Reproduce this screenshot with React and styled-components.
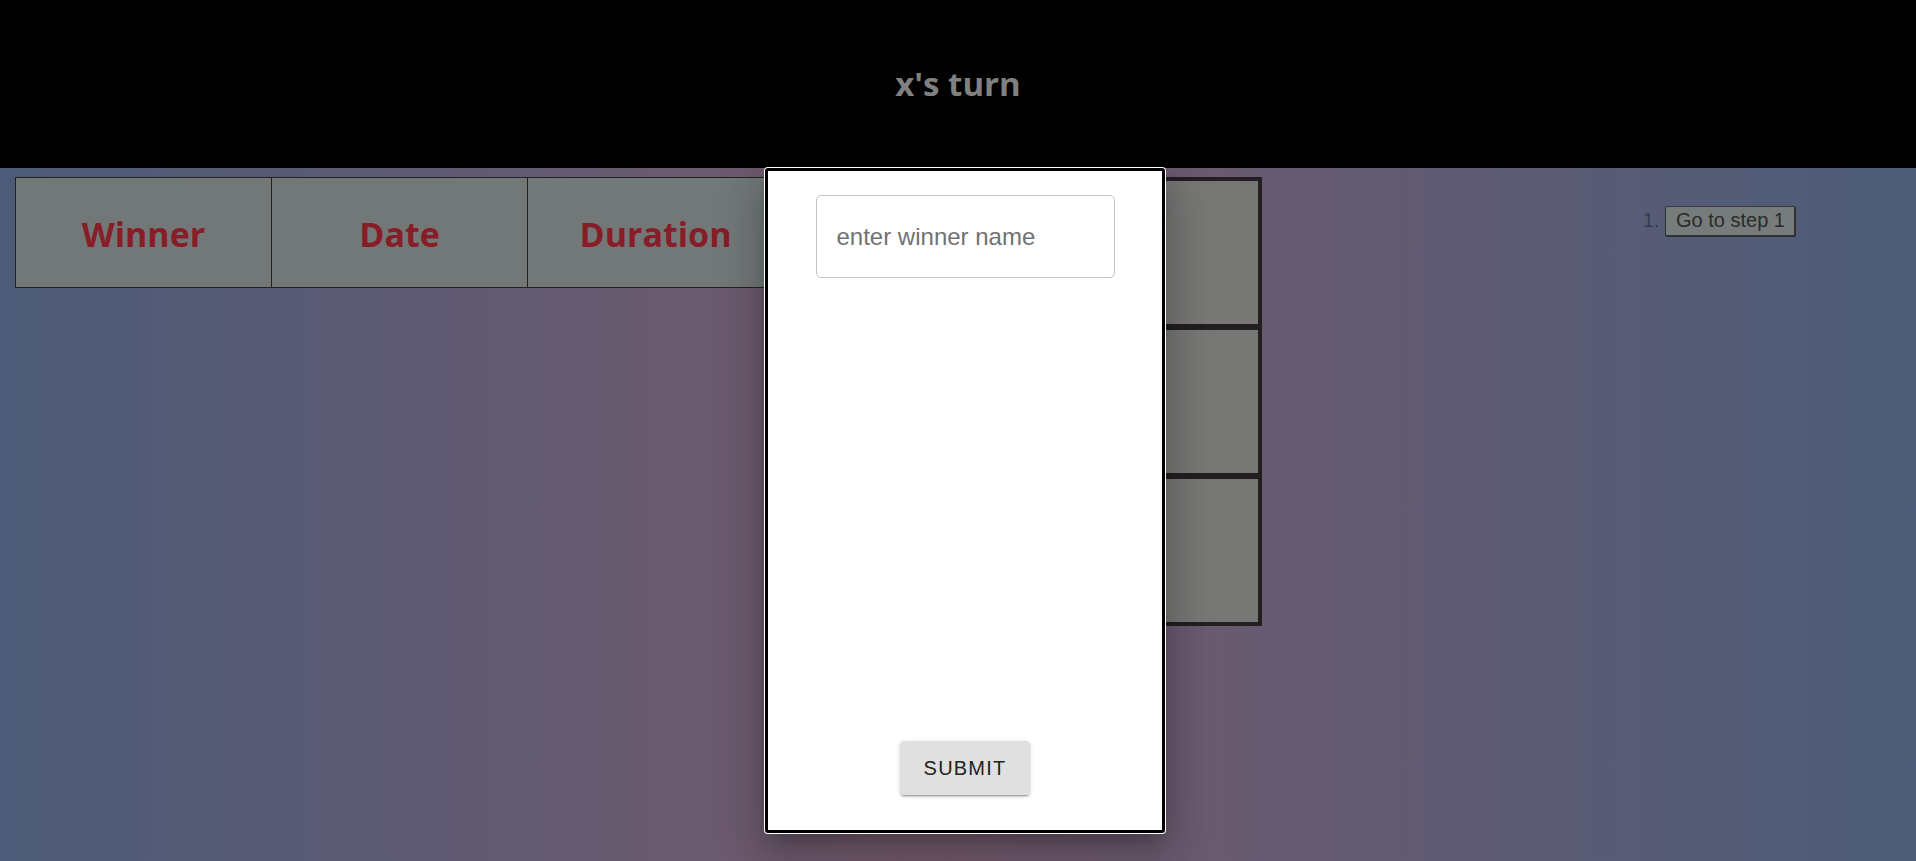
import React from 'react'
import styled, { createGlobalStyle } from 'styled-components'

const columns = ['Winner', 'Date', 'Duration']
const moves = ['Go to step 1']

const GlobalStyle = createGlobalStyle`
  html, body {
    margin: 0;
    padding: 0;
  }
  body {
    font-family: 'Liberation Sans', Arial, sans-serif;
  }
`

const Page = styled.div`
  position: relative;
  min-height: 100vh;
  background: linear-gradient(to right, #4c5b78 0%, #745a6c 48%, #705a6e 54%, #4c5c78 100%);
  overflow: hidden;
`

const Header = styled.header`
  height: 168px;
  background: #000;
  display: flex;
  align-items: center;
  justify-content: center;

  > h1 {
    margin: 0;
    color: #808080;
    font-family: 'Open Sans', sans-serif;
    font-weight: 700;
    font-size: 33px;
    line-height: 1;
    padding: 0 0 2px 0;
  }
`

const Main = styled.main`
  display: flex;
  align-items: flex-start;
  padding: 9px 0 0 15px;
`

const Table = styled.table`
  border-collapse: collapse;
  table-layout: fixed;

  th {
    width: 255px;
    height: 106px;
    border: 1px solid #222;
    background: #727878;
    color: #871d26;
    font-family: 'Open Sans', sans-serif;
    font-weight: 700;
    font-size: 34px;
    text-align: center;
    vertical-align: middle;
    padding: 3px 0 0;
  }
`

const Board = styled.div`
  margin-left: 26px;
  display: grid;
  grid-template-columns: repeat(3, 150px);
  grid-template-rows: repeat(3, 149px);
  border: 1px solid #231e22;
`

const Square = styled.button`
  box-sizing: border-box;
  border: 3px solid #231e22;
  background: #777776;
  padding: 0;
`

const Moves = styled.ol`
  margin: 28px 0 0 363px;
  padding-left: 40px;
  color: #363a50;
  font-size: 20px;
  line-height: 31px;
`

const StepButton = styled.button`
  box-sizing: border-box;
  height: 31px;
  padding: 0 9px 0 10px;
  background: #767b7b;
  color: #2b2b2b;
  border: 2px solid #2f3036;
  border-top-color: #3a3b42;
  border-left-width: 1px;
  border-top-width: 1px;
  border-radius: 2px;
  font-family: 'Liberation Sans', Arial, sans-serif;
  font-size: 20px;
`

const Dialog = styled.div`
  position: absolute;
  left: 764px;
  top: 167px;
  width: 402px;
  height: 667px;
  box-sizing: border-box;
  padding: 1px;
  background: #fff;
  border-radius: 4px;
  box-shadow: 0 11px 15px -7px rgba(0,0,0,0.2), 0 24px 38px 3px rgba(0,0,0,0.14), 0 9px 46px 8px rgba(0,0,0,0.12);
`

const DialogBody = styled.form`
  height: 100%;
  box-sizing: border-box;
  border: 3px solid #000;
  border-radius: 3px;
  display: flex;
  flex-direction: column;
  justify-content: space-between;
  align-items: center;
  padding: 24px 0 35px;
`

const NameInput = styled.input`
  box-sizing: border-box;
  width: 299px;
  height: 83px;
  border: 1px solid #c4c4c4;
  border-radius: 5px;
  padding: 0 20px;
  font-family: 'Liberation Sans', Arial, sans-serif;
  font-size: 24px;
  color: #333;
  outline: none;

  &::placeholder {
    color: #727272;
  }
`

const SubmitButton = styled.button`
  box-sizing: border-box;
  width: 130px;
  height: 54px;
  border: 0;
  border-radius: 4px;
  background: #e0e0e0;
  color: #222;
  font-family: 'Liberation Sans', Arial, sans-serif;
  font-size: 20px;
  letter-spacing: 1.2px;
  text-transform: uppercase;
  box-shadow: 0 3px 1px -2px rgba(0,0,0,0.2), 0 2px 2px 0 rgba(0,0,0,0.14), 0 1px 5px 0 rgba(0,0,0,0.12);
`

export default function App() {
  return (
    <Page>
      <GlobalStyle />
      <Header>
        <h1>x's turn</h1>
      </Header>
      <Main>
        <Table>
          <thead>
            <tr>
              {columns.map(c => <th key={c}>{c}</th>)}
            </tr>
          </thead>
        </Table>
        <Board>
          {Array.from({ length: 9 }).map((_, i) => <Square key={i} />)}
        </Board>
        <Moves>
          {moves.map(m => (
            <li key={m}><StepButton>{m}</StepButton></li>
          ))}
        </Moves>
      </Main>
      <Dialog>
        <DialogBody onSubmit={e => e.preventDefault()}>
          <NameInput placeholder="enter winner name" />
          <SubmitButton type="submit">Submit</SubmitButton>
        </DialogBody>
      </Dialog>
    </Page>
  )
}
